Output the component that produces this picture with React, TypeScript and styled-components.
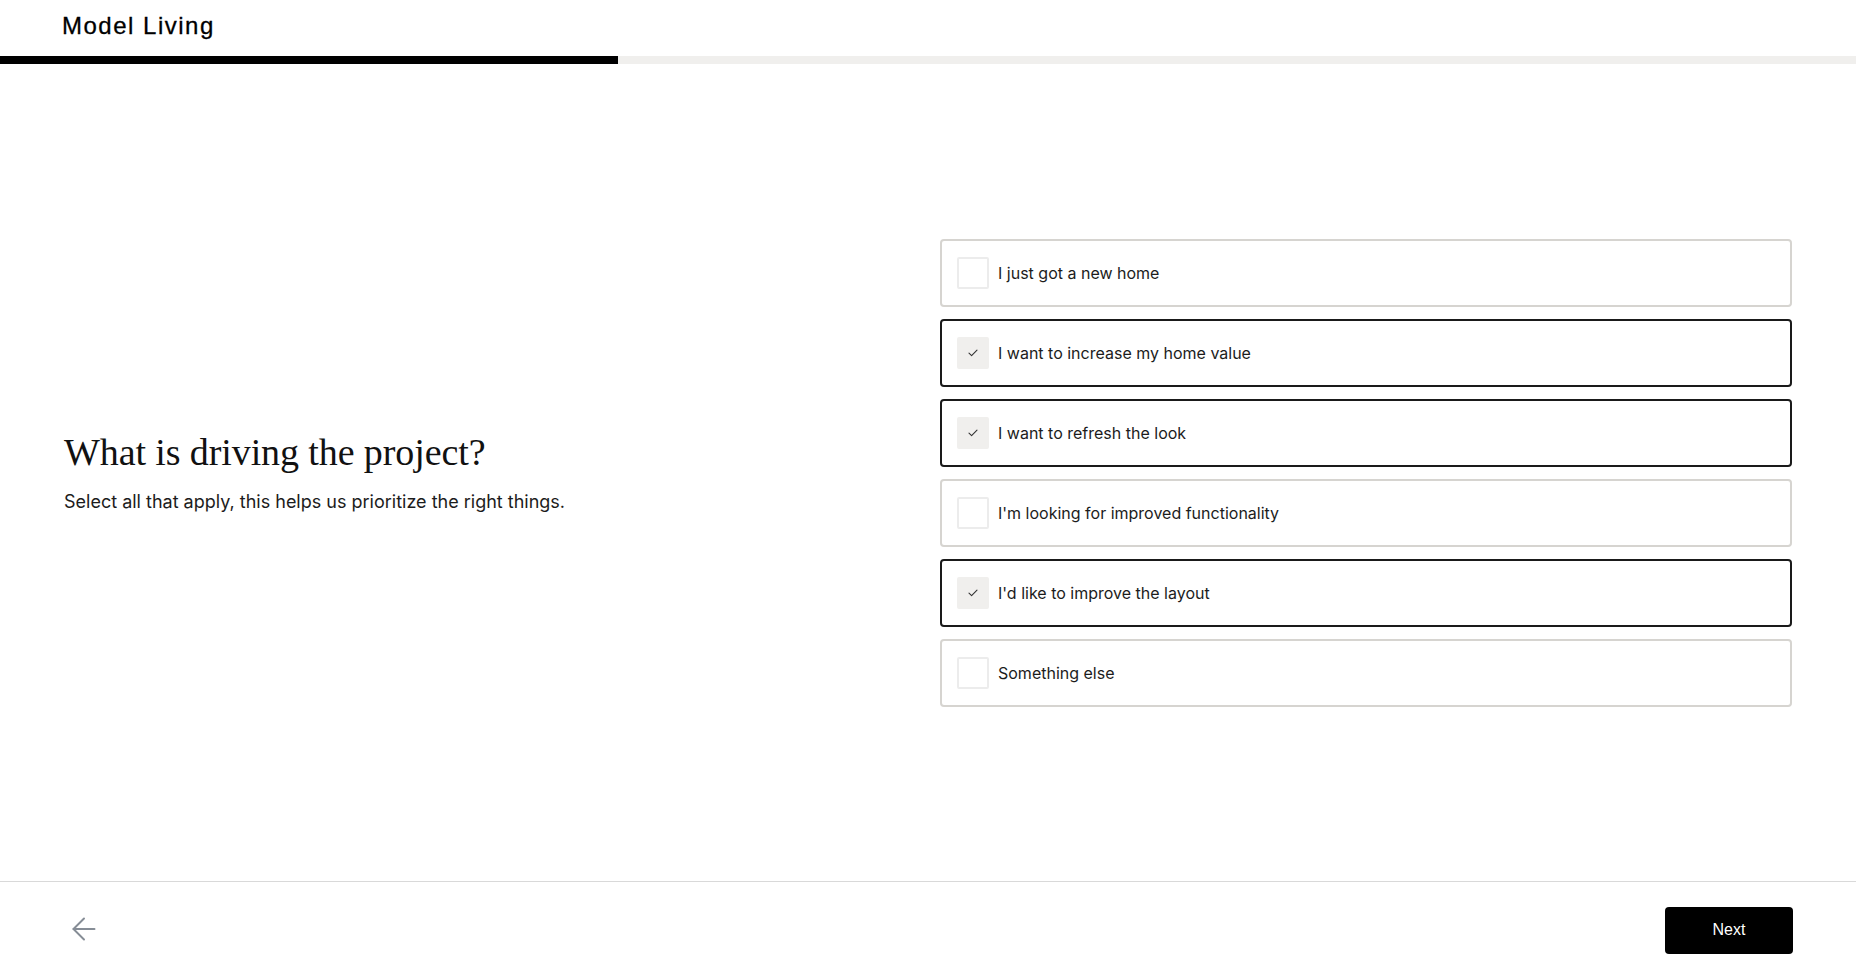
import * as React from "react";
import styled, { createGlobalStyle, css } from "styled-components";
import { ArrowLeft } from "lucide-react";

const GlobalStyle = createGlobalStyle`
  html, body {
    margin: 0;
    padding: 0;
    background: #ffffff;
  }

  body {
    font-family: Inter, "Noto Sans", sans-serif;
    color: #1a1a1a;
    -webkit-font-smoothing: antialiased;
  }

  * {
    box-sizing: border-box;
  }
`;

const colors = {
  ink: "#000000",
  text: "#1c1c1c",
  muted: "#868d96",
  track: "#f0efed",
  border: "#d6d4d0",
  boxBorder: "#ececec",
  rule: "#d9d9d9",
};

const Page = styled.div`
  display: flex;
  flex-direction: column;
  height: 100vh;
  min-height: 976px;
`;

const Header = styled.header`
  display: flex;
  align-items: center;
  height: 56px;
  padding: 0 62px 4px;
`;

const Logo = styled.span`
  font-family: "Liberation Sans", Arial, sans-serif;
  font-size: 24px;
  letter-spacing: 1.5px;
  color: ${colors.ink};
  -webkit-text-stroke: 0.3px ${colors.ink};
`;

const ProgressTrack = styled.div`
  height: 8px;
  background: ${colors.track};
`;

const ProgressFill = styled.div`
  height: 100%;
  background: ${colors.ink};
`;

const Main = styled.main`
  flex: 1;
  display: grid;
  grid-template-columns: 1fr 1fr;
  column-gap: 24px;
  align-items: center;
  padding: 0 64px;
`;

const Intro = styled.section`
  display: flex;
  flex-direction: column;
  gap: 15px;
`;

const Title = styled.h1`
  margin: 0;
  font-family: "Liberation Serif", "Times New Roman", serif;
  font-weight: 400;
  font-size: 38px;
  line-height: 44px;
  letter-spacing: -0.1px;
  color: #111111;
`;

const Subtitle = styled.p`
  margin: 0;
  font-size: 18px;
  line-height: 26px;
  color: ${colors.text};
`;

const OptionList = styled.div`
  display: flex;
  flex-direction: column;
  gap: 12px;
`;

const OptionCard = styled.button<{ $checked: boolean }>`
  display: flex;
  align-items: center;
  gap: 9px;
  height: 68px;
  padding: 0 15px;
  background: #ffffff;
  border: 2px solid ${p => (p.$checked ? "#1a1a1a" : colors.border)};
  border-radius: 4px;
  font-family: inherit;
  font-size: 16px;
  color: ${colors.text};
  text-align: left;
  cursor: pointer;
`;

const CheckBox = styled.span<{ $checked: boolean }>`
  display: flex;
  align-items: center;
  justify-content: center;
  width: 32px;
  height: 32px;
  flex: none;
  border-radius: 2px;
  ${p =>
    p.$checked
      ? css`
          background: ${colors.track};
          border: 2px solid ${colors.track};
        `
      : css`
          background: #ffffff;
          border: 2px solid ${colors.boxBorder};
        `}
`;

const Footer = styled.footer`
  display: flex;
  align-items: center;
  justify-content: space-between;
  height: 95px;
  padding: 0 63px 0 64px;
  border-top: 1px solid ${colors.rule};
`;

const BackButton = styled.button`
  display: flex;
  align-items: center;
  justify-content: center;
  width: 40px;
  height: 40px;
  padding: 0;
  border: 0;
  background: none;
  color: ${colors.muted};
  cursor: pointer;
`;

const NextButton = styled.button`
  width: 128px;
  height: 47px;
  margin-top: 2px;
  border: 0;
  border-radius: 4px;
  background: ${colors.ink};
  color: #ffffff;
  font-family: "Liberation Sans", Arial, sans-serif;
  font-size: 16px;
  cursor: pointer;
`;

const CheckMark = () => (
  <svg width="10" height="8" viewBox="0 0 10 8" fill="none">
    <path d="M1 4.2 L3.6 6.6 L9 1.2" stroke="#333" strokeWidth="1.1" strokeLinecap="round" strokeLinejoin="round" />
  </svg>
);

const OPTIONS = [
  { label: "I just got a new home", checked: false },
  { label: "I want to increase my home value", checked: true },
  { label: "I want to refresh the look", checked: true },
  { label: "I'm looking for improved functionality", checked: false },
  { label: "I'd like to improve the layout", checked: true },
  { label: "Something else", checked: false },
];

export default function App() {
  const [options, setOptions] = React.useState(OPTIONS);
  const progress = 618 / 1856;

  const toggle = (i: number) =>
    setOptions(prev => prev.map((o, j) => (j === i ? { ...o, checked: !o.checked } : o)));

  return (
    <Page>
      <GlobalStyle />
      <Header>
        <Logo>Model Living</Logo>
      </Header>
      <ProgressTrack>
        <ProgressFill style={{ width: `${progress * 100}%` }} />
      </ProgressTrack>
      <Main>
        <Intro>
          <Title>What is driving the project?</Title>
          <Subtitle>Select all that apply, this helps us prioritize the right things.</Subtitle>
        </Intro>
        <OptionList>
          {options.map((o, i) => (
            <OptionCard key={o.label} $checked={o.checked} onClick={() => toggle(i)}>
              <CheckBox $checked={o.checked}>{o.checked && <CheckMark />}</CheckBox>
              {o.label}
            </OptionCard>
          ))}
        </OptionList>
      </Main>
      <Footer>
        <BackButton aria-label="Back">
          <ArrowLeft size={36} strokeWidth={1.3} />
        </BackButton>
        <NextButton>Next</NextButton>
      </Footer>
    </Page>
  );
}
